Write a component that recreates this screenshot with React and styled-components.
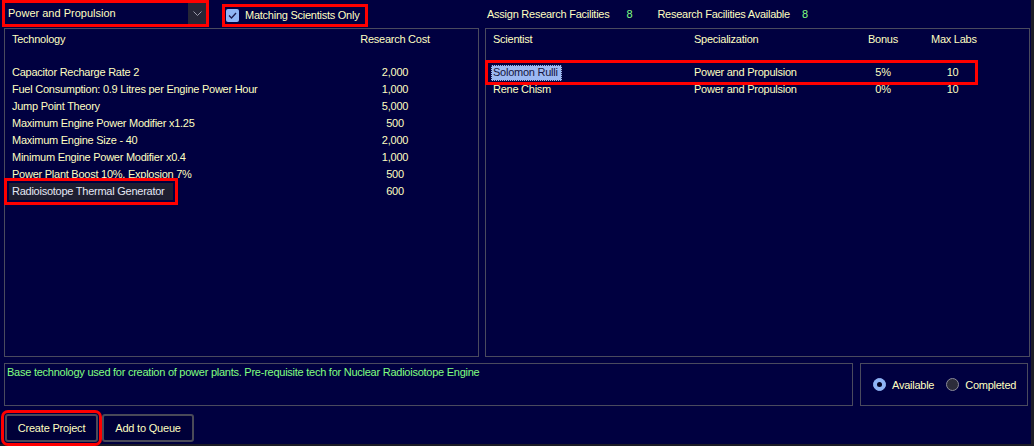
import styled, { createGlobalStyle } from "styled-components";

const GlobalStyle = createGlobalStyle`
  html, body {
    margin: 0;
    padding: 0;
    background: #000040;
  }
  * { box-sizing: border-box; }
`;

const Window = styled.div`
  width: 1034px;
  height: 446px;
  background: #000040;
  color: #ffffc0;
  font-family: "Liberation Sans", Arial, sans-serif;
  font-size: 11px;
  letter-spacing: -0.25px;
  white-space: nowrap;
  padding: 0 5px 0 4px;
  border-right: 3px solid #1c1c26;
  border-bottom: 2px solid #1c1c26;
  display: flex;
  flex-direction: column;
`;

const TopBar = styled.div`
  height: 28px;
  display: flex;
  align-items: center;
`;

const Select = styled.div`
  width: 201px;
  height: 21px;
  margin-left: 1px;
  margin-top: -2px;
  display: flex;
  background: #000040;
  outline: 3px solid #ff0000;
`;

const SelectText = styled.div`
  flex: 1;
  padding: 3px 3px 0;
  line-height: 15px;
  letter-spacing: 0;
  color: #ffffc0;
`;

const SelectArrow = styled.div`
  width: 18px;
  background: #262636;
  display: flex;
  align-items: center;
  justify-content: center;
`;

const CheckLabel = styled.label`
  margin-left: 19px;
  margin-top: 2px;
  width: 140px;
  height: 17px;
  display: flex;
  align-items: center;
  gap: 6px;
  padding-left: 1px;
  outline: 3px solid #ff0000;
`;

const CheckBox = styled.span`
  width: 13px;
  height: 13px;
  border-radius: 2px;
  background: #8fb4f5;
  display: flex;
  align-items: center;
  justify-content: center;
`;

const Stat = styled.div`
  display: flex;
  margin-left: ${p => p.$ml}px;
`;

const StatValue = styled.span`
  color: #80ff80;
  margin-left: ${p => p.$ml}px;
`;

const Panels = styled.div`
  height: 329px;
  display: grid;
  grid-template-columns: 475px 545px;
  column-gap: 6px;
`;

const Panel = styled.div`
  border: 1px solid #4a4a5e;
  padding-top: 2px;
`;

const TechRow = styled.div`
  display: grid;
  grid-template-columns: 348px 70px;
  padding-left: 7px;
  height: 17px;
  line-height: 17px;
  margin-bottom: ${p => (p.$header ? 16 : 0)}px;
`;

const Cost = styled.span`
  text-align: center;
`;

const TechName = styled.span`
  justify-self: start;
  ${p =>
    p.$selected &&
    `
    background: #1e1e30;
    color: #e4e8f4;
    margin-left: -3px;
    padding: 0 8px 0 3px;
    outline: 3px solid #ff0000;
    outline-offset: 2px;
  `}
`;

const SciRow = styled.div`
  display: grid;
  grid-template-columns: 201px 159px 60px 1fr;
  width: 485px;
  margin-left: 3px;
  padding-left: 4px;
  height: 17px;
  line-height: 17px;
  margin-bottom: ${p => (p.$header ? 16 : 0)}px;
  ${p => p.$marked && `outline: 3px solid #ff0000; outline-offset: 1px;`}
`;

const Center = styled.span`
  text-align: center;
`;

const LabsCell = styled.span`
  text-align: center;
  padding-left: 18px;
`;

const SciName = styled.span`
  justify-self: start;
  ${p =>
    p.$selected &&
    `
    background: #9cb8f2;
    color: #141440;
    margin-left: -2px;
    padding: 0 4px 0 2px;
    line-height: 15px;
    margin-top: 1px;
    outline: 1px dotted #202050;
    outline-offset: -1px;
  `}
`;

const BottomRow = styled.div`
  margin-top: 6px;
  height: 43px;
  display: grid;
  grid-template-columns: 849px 168px;
  column-gap: 7px;
`;

const Description = styled.div`
  border: 1px solid #4a4a5e;
  color: #80ff80;
  padding: 1px 2px;
  line-height: 14px;
`;

const RadioBox = styled.div`
  border: 1px solid #4a4a5e;
  display: flex;
  align-items: center;
  padding-left: 12px;
`;

const Radio = styled.span`
  width: 13px;
  height: 13px;
  border-radius: 50%;
  display: inline-flex;
  align-items: center;
  justify-content: center;
  margin-right: 6px;
  background: ${p => (p.$on ? "#8fb4f5" : "#2c2c3a")};
  border: 1px solid ${p => (p.$on ? "#8fb4f5" : "#8a8a98")};
  &::after {
    content: "";
    width: 5px;
    height: 5px;
    border-radius: 50%;
    background: ${p => (p.$on ? "#000020" : "transparent")};
  }
`;

const RadioLabel = styled.span`
  margin-right: ${p => p.$mr || 0}px;
`;

const Buttons = styled.div`
  margin-top: 8px;
  display: flex;
  gap: 4px;
  padding-left: 1px;
`;

const Button = styled.button`
  width: ${p => p.$w}px;
  height: 28px;
  background: #000038;
  color: #ffffc0;
  border: 2px solid #4a4a58;
  border-radius: 3px;
  font-family: inherit;
  font-size: 11px;
  letter-spacing: -0.2px;
  padding: 0;
  ${p => p.$marked && `outline: 3px solid #ff0000; outline-offset: 1px;`}
`;

const techs = [
  ["Capacitor Recharge Rate 2", "2,000"],
  ["Fuel Consumption: 0.9 Litres per Engine Power Hour", "1,000"],
  ["Jump Point Theory", "5,000"],
  ["Maximum Engine Power Modifier x1.25", "500"],
  ["Maximum Engine Size - 40", "2,000"],
  ["Minimum Engine Power Modifier x0.4", "1,000"],
  ["Power Plant Boost 10%, Explosion 7%", "500"],
  ["Radioisotope Thermal Generator", "600"],
];

const scientists = [
  { name: "Solomon Rulli", spec: "Power and Propulsion", bonus: "5%", labs: "10", selected: true },
  { name: "Rene Chism", spec: "Power and Propulsion", bonus: "0%", labs: "10" },
];

export default function App() {
  return (
    <>
      <GlobalStyle />
      <Window>
        <TopBar>
          <Select>
            <SelectText>Power and Propulsion</SelectText>
            <SelectArrow>
              <svg width="9" height="5" viewBox="0 0 9 5">
                <path d="M0.5 0.5 L4.5 4.5 L8.5 0.5" stroke="#9a9aaa" strokeWidth="1" fill="none" />
              </svg>
            </SelectArrow>
          </Select>
          <CheckLabel>
            <CheckBox>
              <svg width="9" height="7" viewBox="0 0 9 7">
                <path d="M1 3.5 L3.5 6 L8 1" stroke="#1a1a50" strokeWidth="1.3" fill="none" />
              </svg>
            </CheckBox>
            Matching Scientists Only
          </CheckLabel>
          <Stat $ml={122}>
            Assign Research Facilities
            <StatValue $ml={17}>8</StatValue>
          </Stat>
          <Stat $ml={25}>
            Research Facilities Available
            <StatValue $ml={12}>8</StatValue>
          </Stat>
        </TopBar>

        <Panels>
          <Panel>
            <TechRow $header>
              <span>Technology</span>
              <Cost>Research Cost</Cost>
            </TechRow>
            {techs.map(([name, cost], i) => (
              <TechRow key={name}>
                <TechName $selected={i === techs.length - 1}>{name}</TechName>
                <Cost>{cost}</Cost>
              </TechRow>
            ))}
          </Panel>
          <Panel>
            <SciRow $header>
              <span>Scientist</span>
              <span>Specialization</span>
              <Center>Bonus</Center>
              <LabsCell>Max Labs</LabsCell>
            </SciRow>
            {scientists.map(s => (
              <SciRow key={s.name} $marked={s.selected}>
                <SciName $selected={s.selected}>{s.name}</SciName>
                <span>{s.spec}</span>
                <Center>{s.bonus}</Center>
                <LabsCell>{s.labs}</LabsCell>
              </SciRow>
            ))}
          </Panel>
        </Panels>

        <BottomRow>
          <Description>
            Base technology used for creation of power plants.  Pre-requisite tech for Nuclear Radioisotope Engine
          </Description>
          <RadioBox>
            <Radio $on />
            <RadioLabel $mr={12}>Available</RadioLabel>
            <Radio />
            <RadioLabel>Completed</RadioLabel>
          </RadioBox>
        </BottomRow>

        <Buttons>
          <Button $w={93} $marked>Create Project</Button>
          <Button $w={92}>Add to Queue</Button>
        </Buttons>
      </Window>
    </>
  );
}
